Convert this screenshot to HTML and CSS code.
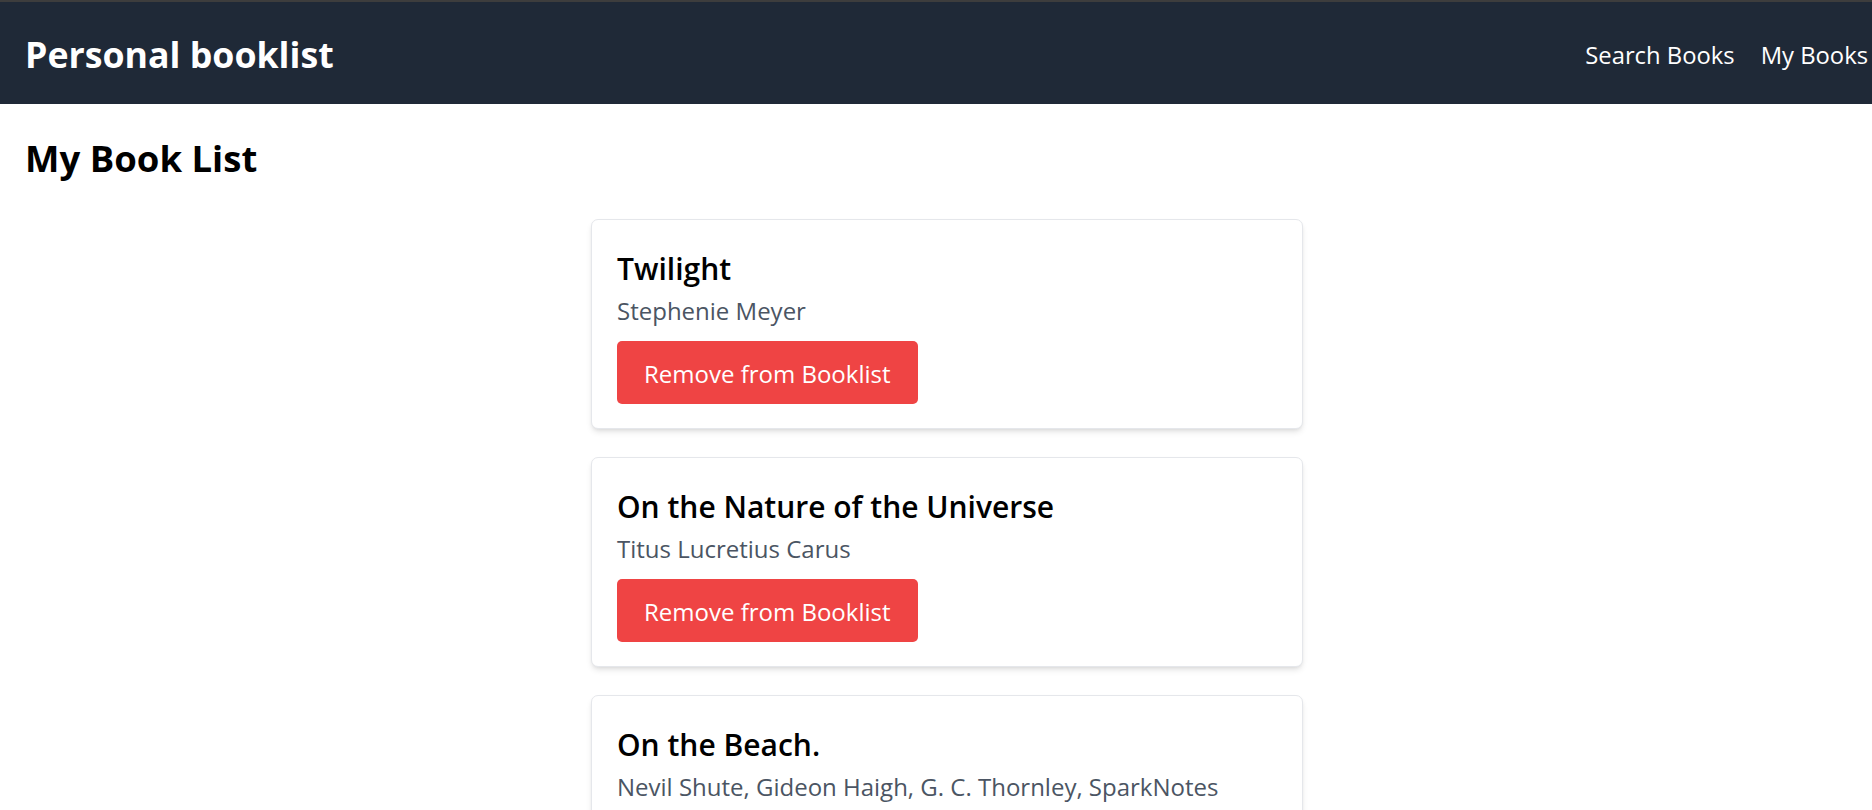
FILE: index.html
```html
<!DOCTYPE html>
<html lang="en">
<head>
<meta charset="utf-8">
<title>Personal booklist</title>
<link rel="stylesheet" href="styles.css">
</head>
<body>
<div class="page">
  <header class="topbar">
    <div class="brand">Personal booklist</div>
    <nav class="nav">
      <a class="nav-link" href="#">Search Books</a>
      <a class="nav-link" href="#">My Books</a>
    </nav>
  </header>
  <main class="content">
    <h1 class="page-title">My Book List</h1>
    <div class="book-list">
      <div class="card">
        <h2 class="book-title">Twilight</h2>
        <p class="book-author">Stephenie Meyer</p>
        <button class="btn-remove">Remove from Booklist</button>
      </div>
      <div class="card">
        <h2 class="book-title">On the Nature of the Universe</h2>
        <p class="book-author">Titus Lucretius Carus</p>
        <button class="btn-remove">Remove from Booklist</button>
      </div>
      <div class="card">
        <h2 class="book-title">On the Beach.</h2>
        <p class="book-author">Nevil Shute, Gideon Haigh, G. C. Thornley, SparkNotes</p>
        <button class="btn-remove">Remove from Booklist</button>
      </div>
    </div>
  </main>
</div>
</body>
</html>
```

FILE: styles.css
```css
html {
  overflow: hidden;
}
body {
  margin: 0;
  font-family: "Open Sans", "Noto Sans", "Liberation Sans", sans-serif;
  color: #000;
  background: #fff;
  border-top: 2px solid #3d3d3d;
}
.page {
  width: 1894px;
}
.topbar {
  height: 102px;
  background: #1f2937;
  display: flex;
  align-items: center;
  justify-content: space-between;
  padding: 0 26px 0 25px;
}
.brand {
  color: #fff;
  font-weight: 700;
  font-size: 35.7px;
  line-height: 44px;
  padding-top: 2px;
}
.nav {
  display: flex;
  gap: 26px;
  padding-top: 4px;
}
.nav-link {
  color: #fff;
  text-decoration: none;
  font-size: 23.8px;
  line-height: 32px;
}
.content {
  padding: 0 25px;
}
.page-title {
  margin: 0;
  padding-top: 30px;
  font-size: 36.5px;
  line-height: 48px;
  font-weight: 700;
}
.book-list {
  display: flex;
  flex-direction: column;
  align-items: center;
  gap: 28px;
  padding-top: 37px;
  margin-left: -25px;
  margin-right: -25px;
}
.card {
  box-sizing: border-box;
  width: 712px;
  height: 210px;
  border: 1px solid #e5e7eb;
  border-radius: 7px;
  background: #fff;
  box-shadow: 0 4px 6px -1px rgba(0,0,0,0.1), 0 2px 4px -2px rgba(0,0,0,0.1);
  padding: 27px 25px 24px 25px;
}
.book-title {
  margin: 0 0 6px;
  padding-top: 2px;
  font-size: 30px;
  line-height: 40px;
  font-weight: 600;
}
.book-author {
  margin: 0 0 14px;
  font-size: 24px;
  line-height: 32px;
  color: #4b5563;
}
.btn-remove {
  height: 63px;
  padding: 2px 27px 0;
  border: none;
  border-radius: 5px;
  background: #ef4444;
  color: #fff;
  font-family: inherit;
  font-size: 24px;
}
```
